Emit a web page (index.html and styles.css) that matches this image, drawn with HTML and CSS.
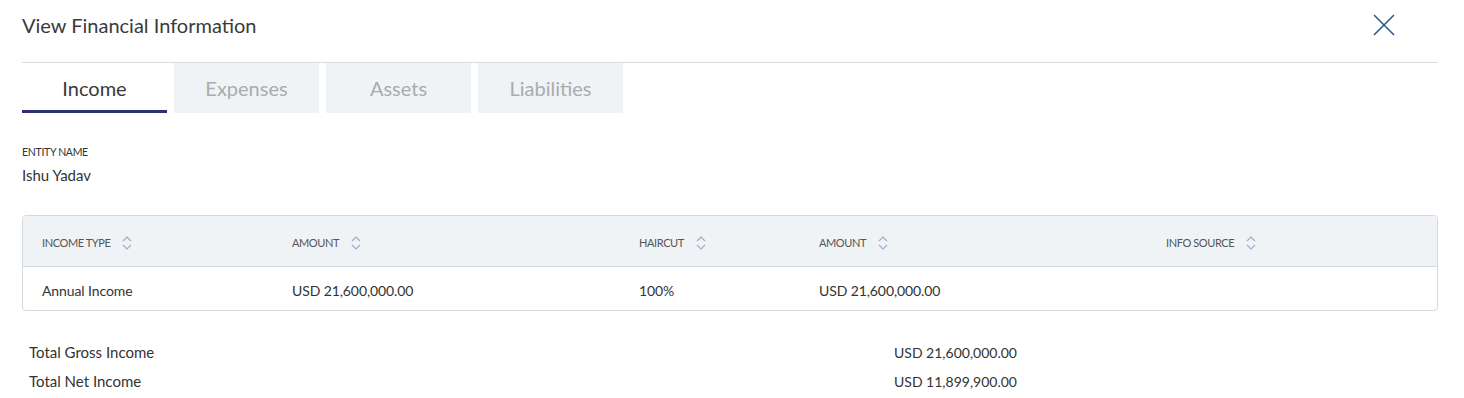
FILE: index.html
```html
<!DOCTYPE html>
<html lang="en">
<head>
<meta charset="utf-8">
<title>View Financial Information</title>
<link rel="stylesheet" href="styles.css">
</head>
<body>
<div class="modal">
  <header class="modal-header">
    <h1 class="modal-title">View Financial Information</h1>
    <button class="close-btn" aria-label="Close">
      <svg width="22" height="22" viewBox="0 0 22 22"><path d="M1 1 L21 21 M21 1 L1 21" stroke="#2b5a8c" stroke-width="1.6" fill="none"/></svg>
    </button>
  </header>

  <nav class="tabs">
    <div class="tab active">Income</div>
    <div class="tab">Expenses</div>
    <div class="tab">Assets</div>
    <div class="tab">Liabilities</div>
  </nav>

  <section class="entity">
    <div class="entity-label">ENTITY NAME</div>
    <div class="entity-value">Ishu Yadav</div>
  </section>

  <div class="table">
    <div class="row head">
      <div class="cell">INCOME TYPE <svg class="sort" width="10" height="16" viewBox="0 0 10 16"><path d="M1 6 L5 2 L9 6 M1 10 L5 14 L9 10" stroke="#9aaecb" stroke-width="1.2" fill="none"/></svg></div>
      <div class="cell">AMOUNT <svg class="sort" width="10" height="16" viewBox="0 0 10 16"><path d="M1 6 L5 2 L9 6 M1 10 L5 14 L9 10" stroke="#9aaecb" stroke-width="1.2" fill="none"/></svg></div>
      <div class="cell">HAIRCUT <svg class="sort" width="10" height="16" viewBox="0 0 10 16"><path d="M1 6 L5 2 L9 6 M1 10 L5 14 L9 10" stroke="#9aaecb" stroke-width="1.2" fill="none"/></svg></div>
      <div class="cell">AMOUNT <svg class="sort" width="10" height="16" viewBox="0 0 10 16"><path d="M1 6 L5 2 L9 6 M1 10 L5 14 L9 10" stroke="#9aaecb" stroke-width="1.2" fill="none"/></svg></div>
      <div class="cell">INFO SOURCE <svg class="sort" width="10" height="16" viewBox="0 0 10 16"><path d="M1 6 L5 2 L9 6 M1 10 L5 14 L9 10" stroke="#9aaecb" stroke-width="1.2" fill="none"/></svg></div>
    </div>
    <div class="row body">
      <div class="cell">Annual Income</div>
      <div class="cell">USD 21,600,000.00</div>
      <div class="cell">100%</div>
      <div class="cell">USD 21,600,000.00</div>
      <div class="cell"></div>
    </div>
  </div>

  <div class="totals">
    <div class="total-label">Total Gross Income</div>
    <div class="total-value">USD 21,600,000.00</div>
    <div class="total-label">Total Net Income</div>
    <div class="total-value">USD 11,899,900.00</div>
  </div>
</div>
</body>
</html>
```

FILE: styles.css
```css
* { box-sizing: border-box; }
html, body { margin: 0; padding: 0; background: #fff; }
body {
  font-family: "Source Sans Pro", Lato, "Liberation Sans", sans-serif;
  color: #333;
}
.modal { padding: 0 26px 0 22px; }

.modal-header {
  height: 63px;
  border-bottom: 1px solid #dcdcdc;
  display: flex;
  align-items: flex-start;
  justify-content: space-between;
}
.modal-title {
  margin: 0;
  font-size: 20px;
  font-weight: 400;
  line-height: 50px;
  color: #3a3a3a;
}
.close-btn {
  margin: 14px 43px 0 0;
  padding: 0;
  border: 0;
  background: none;
  width: 22px;
  height: 22px;
  display: flex;
}

.tabs { display: flex; gap: 7px; }
.tab {
  width: 145px;
  height: 50px;
  background: #f0f3f6;
  color: #a9abae;
  font-size: 20px;
  display: flex;
  align-items: center;
  justify-content: center;
}
.tab.active {
  background: #fff;
  color: #3a3a3a;
  border-bottom: 3px solid #2c3175;
  padding-top: 3px;
}

.entity { margin-top: 32px; }
.entity-label {
  font-size: 10.5px;
  line-height: 14px;
  letter-spacing: -0.3px;
  color: #333;
}
.entity-value {
  margin-top: 6px;
  font-size: 15px;
  line-height: 20px;
}

.table {
  margin-top: 30px;
  border: 1px solid #d6d9dd;
  border-radius: 4px;
  overflow: hidden;
}
.row {
  display: grid;
  grid-template-columns: 250px 347px 180px 347px 1fr;
  padding-left: 19px;
  align-items: center;
}
.row.head {
  height: 51px;
  background: #f0f3f6;
  border-bottom: 1px solid #d6d9dd;
  font-size: 11px;
  color: #555;
  letter-spacing: -0.4px;
  padding-top: 3px;
}
.row.body {
  height: 43px;
  font-size: 14px;
  letter-spacing: -0.1px;
  padding-top: 3px;
}
.cell { display: flex; align-items: center; }
.sort { margin-left: 12px; }

.totals {
  margin-top: 27px;
  padding-left: 7px;
  display: grid;
  grid-template-columns: 865px 1fr;
  font-size: 15px;
  line-height: 29px;
}
.total-value { font-size: 14px; }
```
